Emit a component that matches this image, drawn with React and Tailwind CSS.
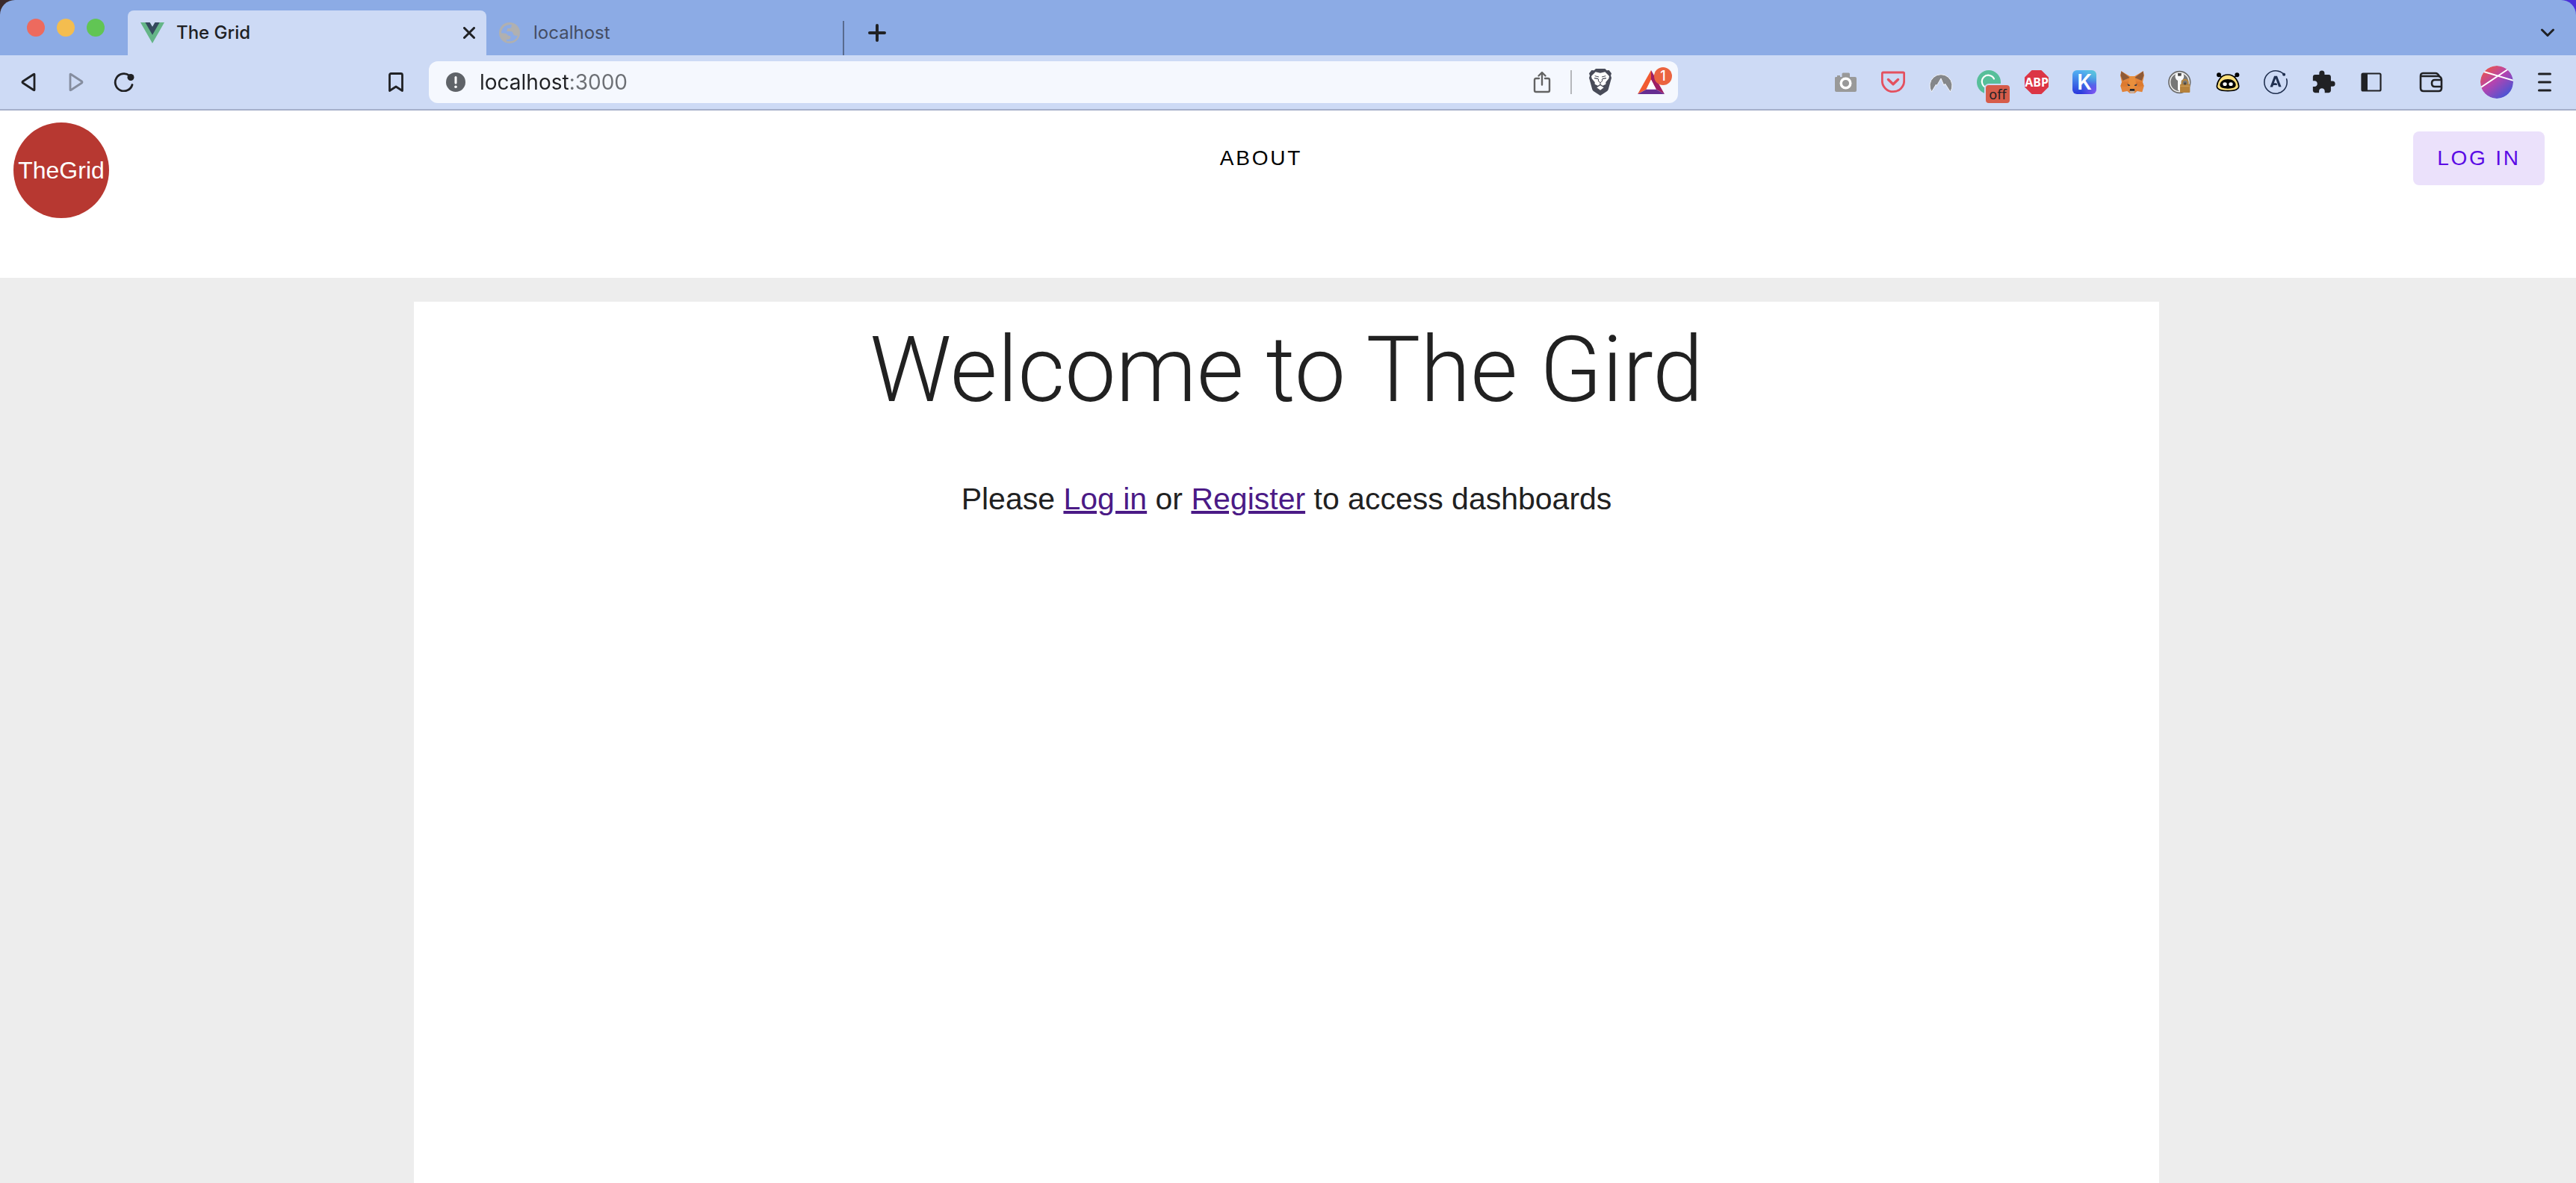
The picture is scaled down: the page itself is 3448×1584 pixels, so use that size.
import React from "react";
import { MdExtension } from "react-icons/md";
import { SiApollographql } from "react-icons/si";

function IconButton({ label, className = "", children }) {
  return (
    <button type="button" aria-label={label} className={"flex size-8 shrink-0 items-center justify-center " + className}>
      {children}
    </button>
  );
}

function VueLogo() {
  return (
    <svg viewBox="0 0 32 28" className="h-7 w-8 shrink-0" aria-hidden="true">
      <path d="M0 0H12.500L16 6L19.500 0H32L16 28Z" fill="#64b587" />
      <path d="M6.400 0H12.500L16 6L19.500 0H25.600L16 16.800Z" fill="#35495e" />
    </svg>
  );
}

function GlobeIcon() {
  return (
    <svg viewBox="0 0 84 84" className="size-7 shrink-0" aria-hidden="true">
      <circle cx="42" cy="42" r="42" fill="#b0b0b0" />
      <path
        d="M10 34Q18 10 44 9H50V16Q50 24 41 24H33V30Q33 35 27 36H46Q55 36 56 45Q57 52 64 53H75Q68 74 44 76H30V68H38Q46 68 46 60V55Q38 55 34 50L28 44L9 43Z"
        fill="#8cabe5"
      />
    </svg>
  );
}

function CloseIcon() {
  return (
    <svg viewBox="0 0 16 16" className="size-4" stroke="#202124" strokeWidth="3" strokeLinecap="round" aria-hidden="true">
      <path d="M1.500 1.500L14.500 14.500M14.500 1.500L1.500 14.500" />
    </svg>
  );
}

function TabStrip() {
  return (
    <div className="flex h-[74px] items-center rounded-t-[20px] bg-[#8cabe5] pl-9 pr-[22px]">
      <div className="flex gap-4">
        <button type="button" aria-label="Close window" className="size-6 rounded-full bg-[#ed6a5e]" />
        <button type="button" aria-label="Minimize window" className="size-6 rounded-full bg-[#f4bd4f]" />
        <button type="button" aria-label="Zoom window" className="size-6 rounded-full bg-[#61c554]" />
      </div>
      <div className="ml-[31px] flex h-[60px] w-[480px] items-center self-end rounded-t-lg bg-[#cddaf5] pl-[17px] pr-[7px]">
        <VueLogo />
        <span className="ml-4 flex-1 text-2xl font-medium text-[#202124]">The Grid</span>
        <IconButton label="Close tab">
          <CloseIcon />
        </IconButton>
      </div>
      <div className="flex h-[60px] w-[477px] items-center self-end pl-[17px]">
        <GlobeIcon />
        <span className="ml-[18px] flex-1 text-2xl text-[#444d63]">localhost</span>
      </div>
      <div className="h-[46px] w-[2px] self-end bg-[#586a8e]" />
      <IconButton label="New tab" className="ml-7 mt-[14px]">
        <svg viewBox="0 0 24 24" className="size-6" stroke="#202124" strokeWidth="4" strokeLinecap="round" aria-hidden="true">
          <path d="M12 2V22M2 12H22" />
        </svg>
      </IconButton>
      <IconButton label="Search tabs" className="ml-auto mt-[14px]">
        <svg viewBox="0 0 20 12" className="h-3 w-5" fill="none" stroke="#202124" strokeWidth="3" strokeLinecap="round" strokeLinejoin="round" aria-hidden="true">
          <path d="M2.500 2L10 9.500L17.500 2" />
        </svg>
      </IconButton>
    </div>
  );
}

function BraveLion() {
  return (
    <svg viewBox="0 0 92 108" className="h-9 w-8" aria-hidden="true">
      <path d="M21 7L28 0H65L72 7L81 6L91 19L88 28L91 37L78 84Q76 89 68 94L46 108L24 94Q16 89 14 84L1 37L4 28L1 19L11 6Z" fill="#484b58" />
      <path d="M27 13L46 17L65 13L82 30L80 40L68 54V62L56 68L46 62L36 68L24 62V54L12 40L10 30Z" fill="#fff" />
      <path d="M46 67L60 76L46 86L32 76Z" fill="#fff" />
      <path d="M24 29L40 33M52 33L68 29M39 42L38 50L46 56L54 50L53 42" fill="none" stroke="#484b58" strokeWidth="3" />
      <path d="M22 38L38 41M54 41L70 38" stroke="#484b58" strokeWidth="4" />
      <path d="M46 56V64" stroke="#484b58" strokeWidth="3" />
    </svg>
  );
}

function AddressBar() {
  return (
    <div className="ml-7 flex h-14 flex-1 items-center rounded-xl bg-[#f5f8fe] pl-5 pr-[18px]">
      <IconButton label="View site information">
        <svg viewBox="0 0 26 26" className="size-[26px]" aria-hidden="true">
          <circle cx="13" cy="13" r="13" fill="#5f6368" />
          <path d="M13 6.500V14" stroke="#fff" strokeWidth="3" strokeLinecap="round" />
          <circle cx="13" cy="19.300" r="1.800" fill="#fff" />
        </svg>
      </IconButton>
      <input
        type="text"
        aria-label="Address"
        defaultValue="localhost:3000"
        className="ml-4 h-12 min-w-0 flex-1 bg-[linear-gradient(to_right,#202124_120px,#6c6f74_120px)] bg-clip-text text-[28px] text-transparent outline-none"
      />
      <IconButton label="Share">
        <svg viewBox="0 0 24 30" className="h-[30px] w-6" fill="none" stroke="#636363" strokeWidth="2.400" strokeLinecap="round" strokeLinejoin="round" aria-hidden="true">
          <path d="M8 10H4Q2 10 2 12V26Q2 28 4 28H20Q22 28 22 26V12Q22 10 20 10H16M12 18.500V2.500M7.500 6.500L12 2L16.500 6.500" />
        </svg>
      </IconButton>
      <div className="ml-[22px] h-8 w-[2px] bg-[#b5b7bb]" />
      <IconButton label="Brave Shields" className="ml-[22px]">
        <BraveLion />
      </IconButton>
      <button type="button" aria-label="Brave Rewards" className="relative ml-[34px] h-8 w-9 shrink-0">
        <svg viewBox="0 0 36 32" className="h-8 w-9" aria-hidden="true">
          <path d="M18 0L0 32L12 25.500L18 13Z" fill="#f15a31" />
          <path d="M18 0L36 32L24.500 25.500L18 13Z" fill="#9e1f63" />
          <path d="M0 32H36L24.500 25.500H12Z" fill="#662d91" />
          <path d="M18 12.500L11.500 25.500H24.800Z" fill="#fff" />
        </svg>
        <span className="absolute -right-[10px] -top-1 flex size-6 items-center justify-center rounded-full bg-[#eb6440] text-lg font-medium text-white">
          1
        </span>
      </button>
    </div>
  );
}

function Extensions() {
  return (
    <div className="ml-[208px] flex items-center gap-8">
      <IconButton label="Screenshot">
        <svg viewBox="0 0 32 32" className="size-8" aria-hidden="true">
          <path d="M3 9Q2 9 2 10.500V27Q2 29 4 29H29Q31 29 31 27V11Q31 9 29 9H22V5Q22 3.500 20.500 3.500H13Q11.500 3.500 11.500 5V9H9V7H5V9Z" fill="#999" />
          <circle cx="16.500" cy="17.500" r="6.300" fill="#999" stroke="#fff" strokeWidth="3.400" />
        </svg>
      </IconButton>
      <IconButton label="Pocket">
        <svg viewBox="0 0 32 32" className="size-8" fill="none" stroke="#e4505f" strokeLinecap="round" strokeLinejoin="round" aria-hidden="true">
          <path d="M2.500 3H29.500Q30.700 3 30.700 4.300V14A14.700 14.700 0 0 1 1.300 14V4.300Q1.300 3 2.500 3Z" strokeWidth="2.800" />
          <path d="M9.500 12.500L16 18.700L22.500 12.500" strokeWidth="3.400" />
        </svg>
      </IconButton>
      <IconButton label="NordVPN">
        <svg viewBox="0 0 32 32" className="size-8" aria-hidden="true">
          <path d="M3.500 29A15 15 0 1 1 28.500 29L21.500 18L20 20.500L16 11L10.500 20.500L9.500 19Z" fill="#85878a" stroke="#f3f5fa" strokeWidth="1" strokeLinejoin="round" />
        </svg>
      </IconButton>
      <button type="button" aria-label="Grammarly" className="relative size-8 shrink-0">
        <svg viewBox="0 0 32 32" className="size-8" fill="none" aria-hidden="true">
          <circle cx="16" cy="16" r="16" fill="#57bf9a" />
          <path d="M23 11.500A8.500 8.500 0 1 0 12 23" stroke="#fff" strokeWidth="2.200" strokeLinecap="round" />
        </svg>
        <span className="absolute -bottom-3.5 -right-3.5 flex h-7 w-9 items-center justify-center rounded-md border-2 border-[#cddaf5] bg-[#d65c4a] font-['Noto_Sans',sans-serif] text-lg text-[#202124]">
          off
        </span>
      </button>
      <button
        type="button"
        aria-label="Adblock Plus"
        className="flex size-8 shrink-0 items-center justify-center bg-[#dc3545] font-['Noto_Sans',sans-serif] text-base font-bold text-white [clip-path:polygon(30%_0,70%_0,100%_30%,100%_70%,70%_100%,30%_100%,0_70%,0_30%)]"
      >
        ABP
      </button>
      <button
        type="button"
        aria-label="Keplr"
        className="flex size-8 shrink-0 items-center justify-center rounded-md bg-[radial-gradient(circle_at_100%_0,#5cc8d8_0%,transparent_45%),radial-gradient(circle_at_100%_100%,#8a5cf5_0%,transparent_45%),linear-gradient(to_bottom,#53b4f2,#2b36dc)] text-[28px] font-semibold leading-8 text-white"
      >
        K
      </button>
      <IconButton label="MetaMask">
        <svg viewBox="0 0 96 96" className="size-8" aria-hidden="true">
          <path d="M4 4L38 24H58L92 4L96 20L90 48L95 64L88 88L68 84L58 92H38L28 84L8 88L1 64L6 48L0 20Z" fill="#e2843a" />
          <path d="M4 4L38 30L10 42L2 22ZM92 4L58 30L86 42L94 22Z" fill="#8d5a38" />
          <path d="M38 24H58L62 46L58 74H38L34 46Z" fill="#e98f3c" />
          <path d="M8 46L34 46L26 66L1 64ZM88 46L62 46L70 66L95 64Z" fill="#dd7a2f" />
          <path d="M28 54L40 60L38 63H31ZM68 54L56 60L58 63H65Z" fill="#3a3c48" />
          <path d="M39 75H57L58 84H38Z" fill="#23262e" />
          <path d="M38 83H58L56 91H40Z" fill="#c9b5a4" />
        </svg>
      </IconButton>
      <IconButton label="Password manager">
        <svg viewBox="0 0 96 96" className="size-8" aria-hidden="true">
          <circle cx="46" cy="48" r="43" fill="#f4f4f4" stroke="#6b6b6b" strokeWidth="5" />
          <circle cx="46" cy="48" r="36" fill="#777" />
          <path d="M30 16Q24 34 39 42V78L46 85L53 78V42Q68 34 62 16L53 12V24H39V12Z" fill="#fafafa" />
          <path d="M39 12H53V18L46 22L39 18Z" fill="#444" />
          <path d="M56 58V50A12 12 0 0 1 80 50V58" fill="none" stroke="#b9873f" strokeWidth="6" />
          <rect x="48" y="56" width="40" height="34" rx="3" fill="#b5813b" />
          <path d="M48 64H88" stroke="#c99852" strokeWidth="5" />
          <circle cx="68" cy="54" r="5" fill="#554a3a" />
        </svg>
      </IconButton>
      <IconButton label="Bee wallet">
        <svg viewBox="0 0 96 96" className="size-8" aria-hidden="true">
          <circle cx="12" cy="19" r="9" fill="#000" />
          <circle cx="85" cy="19" r="9" fill="#000" />
          <path d="M12 19L26 32M85 19L71 32" stroke="#000" strokeWidth="5" />
          <path d="M48 18C76 18 90 44 92 64Q92 83 48 83Q4 83 4 64C6 44 20 18 48 18Z" fill="#fbdf7c" stroke="#000" strokeWidth="5" />
          <path d="M48 36C66 36 80 46 80 60Q80 74 48 74Q16 74 16 60C16 46 30 36 48 36Z" fill="#000" />
          <ellipse cx="36" cy="56" rx="8" ry="7" fill="#fff" />
          <ellipse cx="60" cy="56" rx="8" ry="7" fill="#fff" />
        </svg>
      </IconButton>
      <IconButton label="Apollo Client">
        <SiApollographql className="size-8 text-[#1f2f4f]" />
      </IconButton>
      <IconButton label="Extensions">
        <MdExtension className="size-[34px] shrink-0 text-[#202124]" />
      </IconButton>
      <IconButton label="Sidebar">
        <svg viewBox="0 0 28 26" className="h-[26px] w-7" aria-hidden="true">
          <rect x="1.500" y="1.500" width="25" height="23" rx="1.500" fill="none" stroke="#202124" strokeWidth="2.200" />
          <path d="M1 1H9V25H1Z" fill="#202124" />
        </svg>
      </IconButton>
      <IconButton label="Wallet" className="ml-4">
        <svg viewBox="0 0 32 28" className="h-7 w-8" fill="none" stroke="#202124" strokeWidth="2.600" strokeLinejoin="round" aria-hidden="true">
          <path d="M2 6V22Q2 26 6 26H26Q30 26 30 22V11Q30 7 26 6H2Q2 2 5 2H22Q25 2 27 6M30 11H21Q17 11 17 15.500Q17 20 21 20H30" />
        </svg>
      </IconButton>
    </div>
  );
}

function Toolbar() {
  return (
    <div className="flex h-[74px] items-center border-b-2 border-[#a5b0ca] bg-[#cddaf5] pl-[22px] pr-[26px]">
      <div className="flex gap-8">
        <IconButton label="Back">
          <svg viewBox="0 0 20 26" className="h-[26px] w-5" fill="none" stroke="#202124" strokeWidth="2.800" strokeLinejoin="round" aria-hidden="true">
            <path d="M18 2.500V23.500Q18 24 17 23.500L2.500 14Q1.500 13 2.500 12L17 2.500Q18 2 18 2.500Z" />
          </svg>
        </IconButton>
        <IconButton label="Forward">
          <svg viewBox="0 0 20 26" className="h-[26px] w-5" fill="none" stroke="#858d9f" strokeWidth="2.800" strokeLinejoin="round" aria-hidden="true">
            <path d="M2 2.500V23.500Q2 24 3 23.500L17.500 14Q18.500 13 17.500 12L3 2.500Q2 2 2 2.500Z" />
          </svg>
        </IconButton>
        <IconButton label="Reload">
          <svg viewBox="0 0 28 26" className="h-[26px] w-7" fill="none" stroke="#202124" strokeWidth="2.800" strokeLinecap="round" aria-hidden="true">
            <path d="M21 4.200A11.600 11.600 0 1 0 25 16.500" />
            <circle cx="23" cy="6.500" r="4.500" fill="#202124" stroke="none" />
          </svg>
        </IconButton>
      </div>
      <IconButton label="Bookmark this tab" className="ml-[332px]">
        <svg viewBox="0 0 20 26" className="h-[26px] w-5" fill="none" stroke="#202124" strokeWidth="2.800" strokeLinejoin="round" aria-hidden="true">
          <path d="M3.500 1.500H16.500Q18.500 1.500 18.500 3.500V24.500L10 19L1.500 24.500V3.500Q1.500 1.500 3.500 1.500Z" />
        </svg>
      </IconButton>
      <AddressBar />
      <Extensions />
      <button type="button" aria-label="Profile" className="ml-[50px] size-11 shrink-0">
        <svg viewBox="0 0 44 44" className="size-11" aria-hidden="true">
          <defs>
            <linearGradient id="avatar" x1="0.15" y1="0.1" x2="0.8" y2="0.9">
              <stop offset="0" stopColor="#e85450" />
              <stop offset="0.45" stopColor="#b444b0" />
              <stop offset="1" stopColor="#4a54d4" />
            </linearGradient>
            <clipPath id="avatar-clip">
              <circle cx="22" cy="22" r="22" />
            </clipPath>
          </defs>
          <g clipPath="url(#avatar-clip)">
            <circle cx="22" cy="22" r="22" fill="url(#avatar)" />
            <path d="M3 7.500L45 20M0 29.500L38 4" stroke="#fff" strokeWidth="2" />
          </g>
        </svg>
      </button>
      <IconButton label="Menu" className="ml-[26px]">
        <svg viewBox="0 0 18 26" className="h-[26px] w-[18px]" stroke="#202124" strokeWidth="3" strokeLinecap="round" aria-hidden="true">
          <path d="M1.500 2H16.500M1.500 13H16.500M1.500 24H16.500" />
        </svg>
      </IconButton>
    </div>
  );
}

export default function App() {
  return (
    <div className="flex min-h-screen flex-col font-['Liberation_Sans',Arial,sans-serif]">
      <div className="bg-linear-to-r from-[#3a2a2c] to-[#4a30d8] font-['Inter',sans-serif]">
        <TabStrip />
        <Toolbar />
      </div>
      <header className="flex items-start justify-between bg-white pb-20 pl-[18px] pr-[42px] pt-4">
        <a href="#home" className="flex size-32 items-center justify-center rounded-full bg-[#b73831] text-[32px] text-white">
          TheGrid
        </a>
        <a href="#about" className="mt-3 flex h-[72px] items-center text-[28px] tracking-widest text-black">
          ABOUT
        </a>
        <button type="button" className="mt-3 h-[72px] w-44 rounded-lg bg-[#ebe1fb] text-[28px] tracking-widest text-[#5b0be5]">
          LOG IN
        </button>
      </header>
      <div className="grid flex-1 grid-cols-[554fr_2336fr_558fr] bg-[#ededed] pt-8">
        <main className="col-start-2 bg-white pt-8 text-center text-[#212121]">
          <h1 className="font-['Roboto',sans-serif] text-[122px] font-light leading-[120px]">Welcome to The Gird</h1>
          <p className="mt-20 text-[41px] leading-[64px]">
            Please{" "}
            <a href="#login" className="text-[#4b1a86] underline decoration-4">
              Log in
            </a>{" "}
            or{" "}
            <a href="#register" className="text-[#4b1a86] underline decoration-4">
              Register
            </a>{" "}
            to access dashboards
          </p>
        </main>
      </div>
    </div>
  );
}
